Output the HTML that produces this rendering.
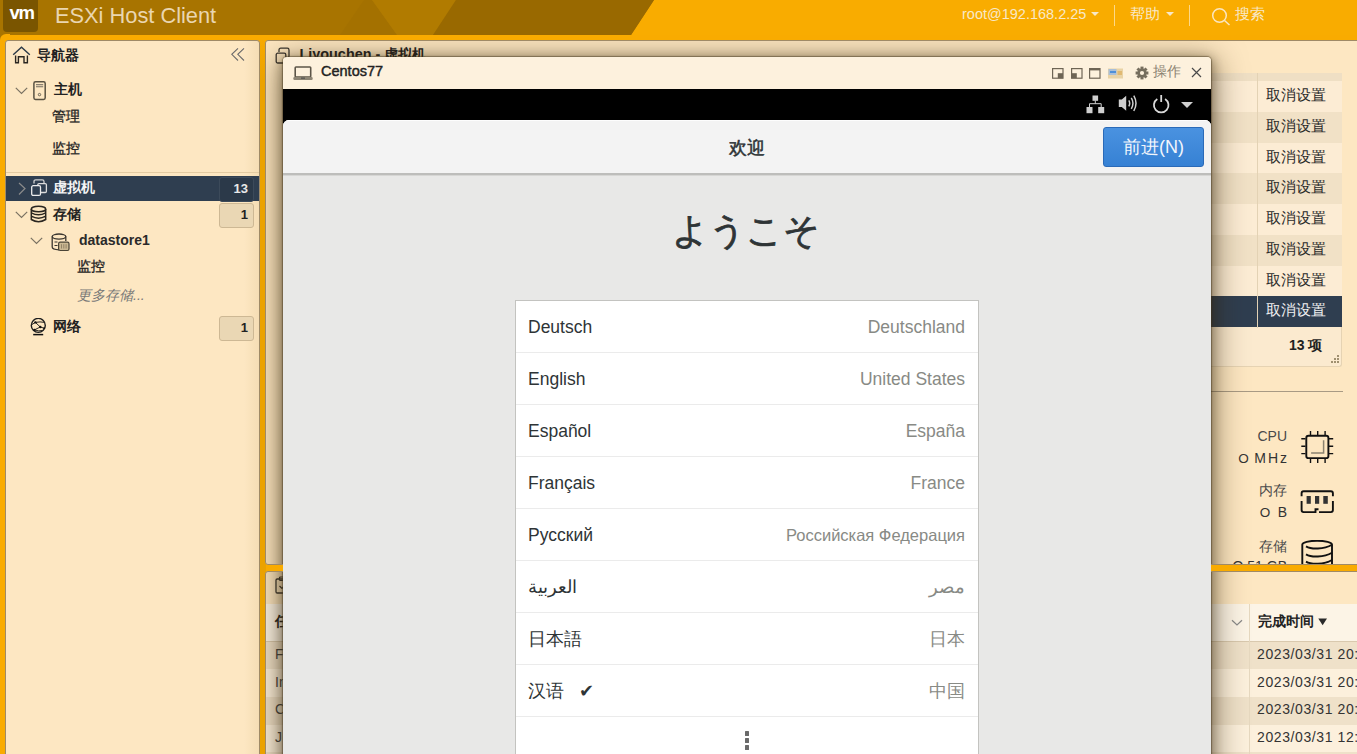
<!DOCTYPE html>
<html><head><meta charset="utf-8">
<style>
*{box-sizing:border-box;margin:0;padding:0}
html,body{width:1357px;height:754px;overflow:hidden}
body{position:relative;background:#f9ab00;font-family:"Liberation Sans",sans-serif;color:#222}
.abs{position:absolute}
#hdr{left:0;top:0;width:1357px;height:35px;background:#a87500;overflow:hidden}
#logo{left:3px;top:0;width:35px;height:32px;background:#7a5500;border-radius:0 0 4px 4px}
#nav{left:5px;top:40px;width:255px;height:730px;background:#fde7c2;border:1px solid #9f8a66;border-radius:3px}
#main{left:265px;top:40px;width:1100px;height:525px;background:#fde7c2;border:1px solid #9f8a66;border-radius:3px;overflow:hidden}
#lower{left:265px;top:571px;width:1100px;height:200px;background:#fde7c2;border:1px solid #9f8a66;border-radius:3px;overflow:hidden}
#modal{left:283px;top:57px;width:928px;height:720px;background:#fdf1dd;border-radius:4px 4px 0 0;overflow:hidden}
#mbar{left:0;top:0;width:928px;height:32px}
#black{left:0;top:32px;width:928px;height:40px;background:#000}
#gn{left:0;top:63px;width:928px;height:700px;background:#e8e8e7;border-radius:6px 6px 0 0;overflow:hidden}
#gnh{left:0;top:0;width:928px;height:55px;background:#f3f3f3;border-bottom:2px solid #bdbdbb;box-shadow:0 1px 0 #d6d6d4}
#list{left:232px;top:180px;width:464px;height:600px;background:#fff;border:1px solid #c3c3c0}
.row{position:absolute;left:0;width:462px;height:52px;border-bottom:1px solid #ebebeb}
.row .l{position:absolute;left:12px;top:16px;font-size:17.5px;line-height:20px;color:#2e3436}
.row .r{position:absolute;right:13px;top:16px;font-size:17.5px;line-height:20px;color:#888a85}
.caret{width:0;height:0;border-left:4px solid transparent;border-right:4px solid transparent;border-top:4px solid #f8e8c8}
.nt{position:absolute;font-size:14px;line-height:16px;color:#222}
.badge{position:absolute;left:213px;width:35px;height:25px;border:1px solid #cdb894;background:#ead7b4;border-radius:3px;font-size:13px;font-weight:bold;text-align:right;padding-right:5px;line-height:21px;color:#222}
.rt{position:absolute;left:880px;width:141px;font-size:14px;line-height:16px;color:#4a4a4a;text-align:right}
.shd{position:absolute;width:928px;height:1200px;border-radius:4px;box-shadow:0 0 1px 1px rgba(70,55,30,.5), 0 3px 10px 3px rgba(50,35,10,.3), 0 6px 30px 5px rgba(55,38,10,.5)}
</style></head>
<body>
<div id="hdr" class="abs">
  <svg class="abs" style="left:0;top:0" width="1357" height="35">
    <rect x="0" y="0" width="1357" height="35" fill="#f9ac00"/>
    <polygon points="0,0 654,0 631,35 0,35" fill="#a87400"/>
    <polygon points="340,35 364,0 372,0 397,35" fill="#a47100"/>
    <polygon points="372,0 456,0 433,35 397,35" fill="#b17b00"/>
    <polygon points="456,0 654,0 631,35 433,35" fill="#996900"/>
  </svg>
  <div id="logo" class="abs"></div>
  <div class="abs" style="left:9.5px;top:3.2px;font-size:18.5px;line-height:20px;font-weight:bold;color:#fff;letter-spacing:-1.3px">vm</div>
  <div class="abs" style="left:55px;top:2.5px;font-size:21.8px;color:#ead6b0;line-height:26px">ESXi Host Client</div>
  <div class="abs" style="left:962px;top:5.5px;font-size:14.5px;color:#f8e8c8;line-height:16px">root@192.168.2.25</div>
  <div class="abs caret" style="left:1091px;top:12px"></div>
  <div class="abs" style="left:1114px;top:5px;width:1px;height:21px;background:#fdd888"></div>
  <div class="abs" style="left:1129.5px;top:5.5px;font-size:15px;color:#f8e8c8;line-height:16px">帮助</div>
  <div class="abs caret" style="left:1166px;top:12px"></div>
  <div class="abs" style="left:1189px;top:5px;width:1px;height:21px;background:#fdd888"></div>
  <svg class="abs" style="left:1211px;top:7px" width="22" height="19"><circle cx="8.5" cy="8.5" r="6.8" fill="none" stroke="#fbe6c0" stroke-width="1.5"/><line x1="13.5" y1="13.5" x2="18.5" y2="18" stroke="#fbe6c0" stroke-width="1.5"/></svg>
  <div class="abs" style="left:1235px;top:6px;font-size:15px;color:#f8e8c8;line-height:16px">搜索</div>
</div>
<div class="abs" style="left:0;top:34px;width:8px;height:8px;background:#a87400"></div><div class="abs" style="left:0;top:34px;width:10px;height:10px;background:#f9ab00;border-top-left-radius:6px"></div>
<div id="nav" class="abs">
  <div class="abs" style="left:238px;top:0;width:15px;height:730px;background:linear-gradient(90deg,rgba(140,90,0,0),rgba(140,90,0,.07))"></div>
  <svg class="abs" style="left:6.3px;top:4.8px" width="20" height="20"><path d="M1.2 8.7 L9.5 1.2 L17.8 8.7" fill="none" stroke="#2c3a48" stroke-width="1.4"/><path d="M3.6 9.5 V16.7 H6.4 V10.7 H12 V16.7 H15.4 V9.5" fill="none" stroke="#2a2620" stroke-width="1.4"/></svg>
  <div class="nt" style="left:31px;top:5.5px;font-weight:bold">导航器</div>
  <svg class="abs" style="left:224px;top:6px" width="18" height="16"><path d="M8 1.3 L1.8 7.3 L8 13.5 M14 1.3 L7.8 7.3 L14 13.5" fill="none" stroke="#6a6a6a" stroke-width="1.1"/></svg>
  <svg class="abs chev" style="left:9px;top:46px" width="14" height="8"><path d="M0.8 0.8 L6.5 6.5 L12.2 0.8" fill="none" stroke="#7a7262" stroke-width="1.2"/></svg>
  <svg class="abs" style="left:27px;top:40px" width="14" height="21"><rect x="0.9" y="0.8" width="11.3" height="17.6" rx="1.6" fill="none" stroke="#5a5242" stroke-width="1.5"/><rect x="3" y="3" width="7.2" height="1.3" fill="#8a8070"/><rect x="3" y="5.1" width="7.2" height="1.2" fill="#8a8070"/><circle cx="6.5" cy="13.6" r="1.2" fill="none" stroke="#6a6252" stroke-width="1"/></svg>
  <div class="nt" style="left:48px;top:40px;font-weight:bold">主机</div>
  <div class="nt" style="left:46px;top:66.5px;-webkit-text-stroke:0.3px #222">管理</div>
  <div class="nt" style="left:46px;top:98.5px;-webkit-text-stroke:0.3px #222">监控</div>
  <div class="abs" style="left:0;top:131px;width:253px;height:1px;background:#e3cba3"></div>
  <div class="abs" style="left:0;top:135px;width:253px;height:25px;background:#2f3e50"></div>
  <svg class="abs" style="left:12px;top:141px" width="9" height="14"><path d="M1 1 L7 6.5 L1 12.5" fill="none" stroke="#8b8b8b" stroke-width="1.2"/></svg>
  <svg class="abs" style="left:24.5px;top:138px" width="18" height="19"><path d="M3 4.6 V2.5 Q3 0.8 4.8 0.8 H11.2 Q13 0.8 13 2.5 V4.2" fill="none" stroke="#d0d0d0" stroke-width="1.3"/><rect x="6.8" y="4.6" width="8.6" height="8.9" rx="1.2" fill="#2f3e50" stroke="#dcdcdc" stroke-width="1.3"/><rect x="0.7" y="6.7" width="8.8" height="9.7" rx="1.5" fill="#2f3e50" stroke="#ececec" stroke-width="1.3"/></svg>
  <div class="nt" style="left:47px;top:137.7px;font-weight:bold;color:#f4f4f4">虚拟机</div>
  <div class="badge" style="top:136px;background:#2b3949;border-color:#3c4a5a;color:#e8e8e8">13</div>
  <svg class="abs chev" style="left:9px;top:170px" width="14" height="8"><path d="M0.8 0.8 L6.5 6.5 L12.2 0.8" fill="none" stroke="#7a7262" stroke-width="1.2"/></svg>
  <svg class="abs" style="left:24px;top:163.7px" width="18" height="19"><ellipse cx="8.5" cy="4" rx="7.2" ry="2.8" fill="none" stroke="#2a2620" stroke-width="1.5"/><path d="M1.3 4 V14.5 Q8.5 18.8 15.7 14.5 V4 M1.3 7.8 Q8.5 11.8 15.7 7.8 M1.3 11.2 Q8.5 15.2 15.7 11.2" fill="none" stroke="#2a2620" stroke-width="1.5"/></svg>
  <div class="nt" style="left:47px;top:165px;font-weight:bold">存储</div>
  <div class="badge" style="top:162px">1</div>
  <svg class="abs chev" style="left:24px;top:196px" width="14" height="8"><path d="M0.8 0.8 L6.5 6.5 L12.2 0.8" fill="none" stroke="#7a7262" stroke-width="1.2"/></svg>
  <svg class="abs" style="left:45px;top:192px" width="20" height="19"><path d="M8 16.8 Q1.2 16.5 1.2 14 V3.6 M14.8 3.6 V8" fill="none" stroke="#3a3630" stroke-width="1.3"/><ellipse cx="8" cy="3.6" rx="6.8" ry="2.6" fill="none" stroke="#3a3630" stroke-width="1.3"/><path d="M3.5 9 H6.5 M3.5 12.5 H6.5" stroke="#3a3630" stroke-width="1.1"/><rect x="7.6" y="9.2" width="10.4" height="8.3" rx="1.5" fill="#cbb993" stroke="#4a4436" stroke-width="1.2"/><path d="M10.5 11.2 V15.5 M12.8 11.2 V15.5 M15.1 11.2 V15.5" stroke="#8d7e62" stroke-width="0.9"/></svg>
  <div class="nt" style="left:73px;top:190.5px;font-weight:bold;color:#2a2a2a">datastore1</div>
  <div class="nt" style="left:71px;top:216.5px;-webkit-text-stroke:0.3px #222">监控</div>
  <div class="nt" style="left:71px;top:246px;font-style:italic;color:#777">更多存储...</div>
  <svg class="abs" style="left:24px;top:277px" width="18" height="19"><circle cx="8.3" cy="7.4" r="7" fill="none" stroke="#1e1e1e" stroke-width="1.4"/><path d="M5.4 4.4 L10.3 9 L4.4 11.9 M5.4 4.4 Q10 3.4 14.6 4.4 M10.3 9 L14.4 10.3 M1.8 6.6 L5.4 4.4 M4.4 11.9 Q9 13.6 12.8 12.4" fill="none" stroke="#2a2620" stroke-width="1"/><g fill="#111"><circle cx="5.4" cy="4.4" r="1.2"/><circle cx="10.3" cy="9" r="1.2"/><circle cx="4.4" cy="11.9" r="1.2"/><circle cx="14.2" cy="10.3" r="1"/></g><line x1="3.2" y1="16.6" x2="13.2" y2="16.6" stroke="#111" stroke-width="1.5"/></svg>
  <div class="nt" style="left:47px;top:276.5px;font-weight:bold">网络</div>
  <div class="badge" style="top:275px">1</div>
</div>
<div class="abs" style="left:260px;top:40px;width:5.5px;height:714px;background:linear-gradient(#f7a900,#eba200 40px)"></div>
<div id="main" class="abs">
  <svg class="abs" style="left:9px;top:5.5px" width="16" height="17"><path d="M4 5 V3 Q4 1.2 5.8 1.2 H12.2 Q14 1.2 14 3 V9.2 Q14 11 12.2 11 H11" fill="none" stroke="#3a3630" stroke-width="1.3"/><rect x="1.2" y="6.2" width="9.6" height="9.8" rx="1.6" fill="none" stroke="#3a3630" stroke-width="1.3"/></svg>
  <div class="abs" style="left:33.5px;top:4.3px;font-size:14.4px;font-weight:bold;line-height:18px;color:#222">Liyouchen - 虚拟机</div>
  <div class="abs" style="left:600px;top:32px;width:476px;height:294px;background:#fbeacf;border:1px solid #e6d3b3;border-top:none;border-radius:0 0 3px 3px"></div>
  <div class="abs" style="left:600px;top:31.6px;width:476px;height:8.6px;background:#efdfc4"></div>
<div class="abs" style="left:600px;top:40.20px;width:476px;height:30.75px;background:#fcecd4"></div><div class="abs" style="left:1000px;top:46.10px;font-size:14.5px;line-height:16px;color:#2a2a2a">取消设置</div><div class="abs" style="left:600px;top:70.95px;width:476px;height:30.75px;background:#f1e1c6"></div><div class="abs" style="left:1000px;top:76.85px;font-size:14.5px;line-height:16px;color:#2a2a2a">取消设置</div><div class="abs" style="left:600px;top:101.70px;width:476px;height:30.75px;background:#fcecd4"></div><div class="abs" style="left:1000px;top:107.60px;font-size:14.5px;line-height:16px;color:#2a2a2a">取消设置</div><div class="abs" style="left:600px;top:132.45px;width:476px;height:30.75px;background:#f1e1c6"></div><div class="abs" style="left:1000px;top:138.35px;font-size:14.5px;line-height:16px;color:#2a2a2a">取消设置</div><div class="abs" style="left:600px;top:163.20px;width:476px;height:30.75px;background:#fcecd4"></div><div class="abs" style="left:1000px;top:169.10px;font-size:14.5px;line-height:16px;color:#2a2a2a">取消设置</div><div class="abs" style="left:600px;top:193.95px;width:476px;height:30.75px;background:#f1e1c6"></div><div class="abs" style="left:1000px;top:199.85px;font-size:14.5px;line-height:16px;color:#2a2a2a">取消设置</div><div class="abs" style="left:600px;top:224.70px;width:476px;height:30.75px;background:#fcecd4"></div><div class="abs" style="left:1000px;top:230.60px;font-size:14.5px;line-height:16px;color:#2a2a2a">取消设置</div><div class="abs" style="left:600px;top:255.45px;width:476px;height:30.75px;background:#2f3e50"></div><div class="abs" style="left:1000px;top:261.35px;font-size:14.5px;line-height:16px;color:#f0f0f0">取消设置</div>
<div class="abs" style="left:991px;top:31.6px;width:1px;height:255px;background:#e3d2b4"></div>
  <div class="abs" style="left:1023px;top:296px;font-size:14px;font-weight:bold;line-height:16px;color:#222">13 项</div>
  <svg class="abs" style="left:1065px;top:314px" width="9" height="9"><g fill="#a09070"><rect x="6" y="0" width="2" height="2"/><rect x="3" y="3" width="2" height="2"/><rect x="6" y="3" width="2" height="2"/><rect x="0" y="6" width="2" height="2"/><rect x="3" y="6" width="2" height="2"/><rect x="6" y="6" width="2" height="2"/></g></svg>
  <div class="abs" style="left:600px;top:350px;width:477px;height:1px;background:#a89a84"></div>
  <div class="abs rt" style="top:386.5px">CPU</div>
  <div class="abs rt" style="top:408.5px;color:#333"><span style="font-size:13.5px">O</span><span style="margin-left:5.5px;letter-spacing:2px;margin-right:-2px">MHz</span></div>
  <svg class="abs" style="left:1034px;top:389px" width="35" height="35"><rect x="6.3" y="5.7" width="22.1" height="22.4" rx="2.2" fill="none" stroke="#111" stroke-width="1.9"/><path d="M23.6 10.2 V23 H11.1" fill="none" stroke="#8a8270" stroke-width="1.5"/><g stroke="#111" stroke-width="1.4"><path d="M10.5 1 V5 M17.7 1 V5 M25.1 1 V5 M10.5 29 V33 M17.7 29 V33 M25.1 29 V33 M1.3 8.7 H5.5 M1.3 16.2 H5.5 M1.3 23.6 H5.5 M29 8.7 H33.2 M29 16.2 H33.2 M29 23.6 H33.2"/></g></svg>
  <div class="abs rt" style="top:440.5px">内存</div>
  <div class="abs rt" style="top:462.5px;color:#333"><span style="font-size:13.5px">O</span><span style="margin-left:7.5px">B</span></div>
  <svg class="abs" style="left:1033px;top:448px" width="37" height="26"><path d="M2.6 7.3 V4.3 Q2.6 2.3 4.6 2.3 H31.9 Q33.9 2.3 33.9 4.3 V7.3 M2.6 12 V21.1 Q2.6 23.1 4.6 23.1 H16.5 V20.2 H19.5 M20 23.1 H31.9 Q33.9 23.1 33.9 21.1 V12" fill="none" stroke="#111" stroke-width="1.9"/><g fill="#333"><rect x="7.6" y="7" width="4.2" height="7.8"/><rect x="16" y="7" width="4.2" height="7.8"/><rect x="24.3" y="7" width="4.5" height="7.8"/></g></svg>
  <div class="abs rt" style="top:496.5px">存储</div>
  <div class="abs rt" style="top:516.5px;color:#333">O.51 GB</div>
  <svg class="abs" style="left:1035px;top:499px" width="34" height="30"><path d="M1.3 25 V4.6 A14.85 3.9 0 0 1 31 4.6 V25" fill="none" stroke="#111" stroke-width="1.9"/><path d="M5 6.4 C10 9.4 23 9.6 31 4.8 M5 14.4 C10 17.4 23 17.6 31 12.8 M5 21.6 C10 24.6 23 24.8 31 20" fill="none" stroke="#111" stroke-width="1.9"/></svg>
  <div class="shd" style="left:17px;top:16px"></div>
</div>
<div id="lower" class="abs">
  <svg class="abs" style="left:9px;top:4px" width="16" height="18"><rect x="1" y="3" width="13" height="14" rx="1.2" fill="none" stroke="#3a3630" stroke-width="1.3"/><rect x="4.5" y="1" width="6" height="3.5" rx="1" fill="none" stroke="#3a3630" stroke-width="1.2"/><path d="M4.5 10 L7 12.5 L11 8" fill="none" stroke="#3a3630" stroke-width="1.2"/></svg>
  <div class="abs" style="left:0;top:31.7px;width:1100px;height:38.1px;background:#fcf4e6;border-bottom:1px solid #d9c9ae"></div>
  <div class="abs" style="left:9px;top:40.5px;font-size:14px;font-weight:bold;line-height:16px;color:#222">任务</div>
  <svg class="abs" style="left:965px;top:47px" width="12" height="8"><path d="M1 1.2 L6 6 L11 1.2" fill="none" stroke="#8a8a8a" stroke-width="1.2"/></svg>
  <div class="abs" style="left:0;top:69.8px;width:1100px;height:27.6px;background:#efe1c9"></div><div class="abs" style="left:991px;top:74.0px;font-size:14px;line-height:16px;color:#333;white-space:nowrap;letter-spacing:0.6px">2023/03/31 20:</div><div class="abs" style="left:9px;top:74.0px;font-size:14px;line-height:16px;color:#444">F</div><div class="abs" style="left:0;top:97.4px;width:1100px;height:27.6px;background:#fcf0dc"></div><div class="abs" style="left:991px;top:101.6px;font-size:14px;line-height:16px;color:#333;white-space:nowrap;letter-spacing:0.6px">2023/03/31 20:</div><div class="abs" style="left:9px;top:101.6px;font-size:14px;line-height:16px;color:#444">In</div><div class="abs" style="left:0;top:125.0px;width:1100px;height:27.6px;background:#efe1c9"></div><div class="abs" style="left:991px;top:129.2px;font-size:14px;line-height:16px;color:#333;white-space:nowrap;letter-spacing:0.6px">2023/03/31 20:</div><div class="abs" style="left:9px;top:129.2px;font-size:14px;line-height:16px;color:#444">C</div><div class="abs" style="left:0;top:152.6px;width:1100px;height:27.6px;background:#fcf0dc"></div><div class="abs" style="left:991px;top:156.8px;font-size:14px;line-height:16px;color:#333;white-space:nowrap;letter-spacing:0.6px">2023/03/31 12:4</div><div class="abs" style="left:9px;top:156.8px;font-size:14px;line-height:16px;color:#444">J</div><div class="abs" style="left:0;top:180.2px;width:1100px;height:27.6px;background:#efe1c9"></div><div class="abs" style="left:991px;top:184.4px;font-size:14px;line-height:16px;color:#333;white-space:nowrap;letter-spacing:0.6px">2023/03/31 12:4</div><div class="abs" style="left:9px;top:184.4px;font-size:14px;line-height:16px;color:#444"></div>
  <div class="abs" style="left:983px;top:32px;width:1px;height:180px;background:#e6d8bf"></div>
  <div class="abs" style="left:992px;top:40.5px;font-size:14px;font-weight:bold;line-height:16px;color:#222;white-space:nowrap">完成时间</div>
  <svg class="abs" style="left:1052px;top:46px" width="10" height="8"><path d="M0.3 0.5 H9 L4.65 7.2 Z" fill="#2a2a2a"/></svg>
  <div class="shd" style="left:17px;top:-515px"></div>
</div>
<div id="modal" class="abs">
  <div id="mbar" class="abs">
    <svg class="abs" style="left:10px;top:9px" width="21" height="15"><rect x="2.2" y="1" width="15.5" height="10" rx="0.8" fill="none" stroke="#5c5548" stroke-width="1.6"/><rect x="0.3" y="11" width="19.4" height="3" rx="1.2" fill="#8d8574"/><rect x="8" y="11.6" width="4" height="1" fill="#444"/></svg>
    <div class="abs" style="left:38px;top:6px;font-size:14.5px;line-height:16px;color:#222;-webkit-text-stroke:0.45px #222">Centos77</div>
    <svg class="abs" style="left:769px;top:11px" width="12" height="11"><rect x="0.6" y="0.6" width="10.4" height="9.6" fill="none" stroke="#6e6555" stroke-width="1.2"/><rect x="5.8" y="5.2" width="5.2" height="5" fill="#6e6555"/></svg>
    <svg class="abs" style="left:788px;top:11px" width="12" height="11"><rect x="0.6" y="0.6" width="10.4" height="9.6" fill="none" stroke="#6e6555" stroke-width="1.2"/><rect x="0.6" y="5.2" width="5.2" height="5" fill="#6e6555"/></svg>
    <svg class="abs" style="left:806px;top:11px" width="12" height="11"><rect x="0.6" y="0.6" width="10.4" height="9.6" fill="none" stroke="#6e6555" stroke-width="1.2"/><rect x="0.6" y="0.6" width="10.4" height="1.8" fill="#6e6555"/></svg>
    <svg class="abs" style="left:825px;top:11px" width="16" height="11"><rect x="0" y="0.5" width="15" height="10" fill="#e9d3a6"/><rect x="0.5" y="1" width="8" height="6" fill="#a9bfd8"/><rect x="2" y="3" width="6" height="2" fill="#4f8fd8"/><rect x="9.5" y="3.5" width="4.5" height="1" fill="#d8a040"/><rect x="9.5" y="5.5" width="4.5" height="1" fill="#d8a040"/></svg>
    <svg class="abs" style="left:851.5px;top:8.5px" width="14" height="14"><g transform="translate(7,7)" fill="#766e5e"><circle r="4.6"/><rect x="-1.5" y="-6.4" width="3" height="2.6"/><rect x="-1.5" y="3.8" width="3" height="2.6"/><rect x="-6.4" y="-1.5" width="2.6" height="3"/><rect x="3.8" y="-1.5" width="2.6" height="3"/><g transform="rotate(45)"><rect x="-1.5" y="-6.4" width="3" height="2.6"/><rect x="-1.5" y="3.8" width="3" height="2.6"/><rect x="-6.4" y="-1.5" width="2.6" height="3"/><rect x="3.8" y="-1.5" width="2.6" height="3"/></g><circle r="2.1" fill="#fdf1dd"/></g></svg>
    <div class="abs" style="left:870px;top:6px;font-size:14px;line-height:16px;color:#8a8272">操作</div>
    <svg class="abs" style="left:908px;top:10px" width="11" height="11"><path d="M1 1 L10 10 M10 1 L1 10" stroke="#4a4a4a" stroke-width="1.2"/></svg>
  </div>
  <div id="black" class="abs">
    <svg class="abs" style="left:802px;top:6px" width="20" height="20"><g fill="#cfcfcf"><rect x="7.5" y="0.5" width="5.6" height="5.3"/><rect x="1.5" y="12" width="6" height="6.2"/><rect x="13.2" y="12" width="6" height="6.2"/></g><path d="M10.3 5.5 V8.7 M4.5 12 V8.7 H16.2 V12" fill="none" stroke="#cfcfcf" stroke-width="1"/></svg>
    <svg class="abs" style="left:835px;top:6px" width="21" height="19"><path d="M0.8 4.5 H3.8 L8.2 0.8 V15.8 L3.8 12 H0.8 Z" fill="#cfcfcf"/><path d="M10.8 5.3 Q12.6 8.3 10.8 11.3 M13.3 2.8 Q16.6 8.3 13.3 13.8 M15.8 0.6 Q20.2 8.3 15.8 16" fill="none" stroke="#cfcfcf" stroke-width="1.5"/></svg>
    <svg class="abs" style="left:869px;top:5px" width="19" height="20"><path d="M5.3 5 A7.3 7.3 0 1 0 13.1 5" fill="none" stroke="#d8d8d8" stroke-width="1.8"/><line x1="9.2" y1="1" x2="9.2" y2="8" stroke="#d8d8d8" stroke-width="1.8"/></svg>
    <div class="abs" style="left:898px;top:13px;width:0;height:0;border-left:6px solid transparent;border-right:6px solid transparent;border-top:6px solid #d0d0d0"></div>
  </div>
  <div id="gn" class="abs">
    <div id="gnh" class="abs">
      <div class="abs" style="left:0;top:0;width:928px;height:1px;background:#fdfdfd"></div>
      <div class="abs" style="left:0;top:17.5px;width:928px;text-align:center;font-size:18px;line-height:20px;color:#2e3436;-webkit-text-stroke:0.5px #2e3436">欢迎</div>
      <div class="abs" style="left:820px;top:7px;width:101px;height:40px;border-radius:3px;border:1px solid #2a6ab8;background:linear-gradient(#4a92e0,#3681d4);color:#f2f6fc;font-size:18px;line-height:38px;text-align:center">前进(N)</div>
    </div>
    <div class="abs" style="left:-1px;top:91px;width:928px;text-align:center;font-size:35.5px;line-height:40px;color:#2e3436;-webkit-text-stroke:0.8px #2e3436">ようこそ</div>
    <div id="list" class="abs">
      <div class="row" style="top:0"><span class="l">Deutsch</span><span class="r">Deutschland</span></div>
      <div class="row" style="top:52px"><span class="l">English</span><span class="r">United States</span></div>
      <div class="row" style="top:104px"><span class="l">Español</span><span class="r">España</span></div>
      <div class="row" style="top:156px"><span class="l">Français</span><span class="r">France</span></div>
      <div class="row" style="top:208px"><span class="l">Русский</span><span class="r" style="font-size:16.5px">Российская Федерация</span></div>
      <div class="row" style="top:260px"><span class="l">العربية</span><span class="r">مصر</span></div>
      <div class="row" style="top:312px"><span class="l">日本語</span><span class="r">日本</span></div>
      <div class="row" style="top:364px"><span class="l">汉语 <span style="margin-left:10px">✔</span></span><span class="r">中国</span></div>
      <div class="abs" style="left:228.8px;top:430.3px;width:4.5px;height:4.6px;background:#6a6a6a;border-radius:0.5px"></div>
      <div class="abs" style="left:228.8px;top:437.3px;width:4.5px;height:4.6px;background:#6a6a6a;border-radius:0.5px"></div>
      <div class="abs" style="left:228.8px;top:444.3px;width:4.5px;height:4.6px;background:#6a6a6a;border-radius:0.5px"></div>
    </div>
  </div>
</div>
</body></html>
